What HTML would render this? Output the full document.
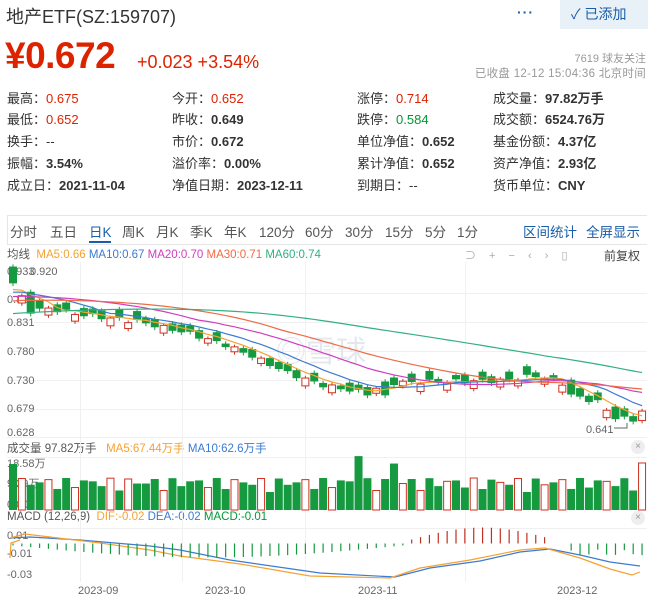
<!DOCTYPE html>
<html><head><meta charset="utf-8">
<style>
*{margin:0;padding:0;box-sizing:border-box}
body{width:648px;height:597px;background:#fff;font-family:"Liberation Sans","Noto Sans CJK SC",sans-serif;color:#333;position:relative;overflow:hidden}
.a{position:absolute;white-space:nowrap}
.r{color:#dd2200}.g{color:#093}
.st{font-size:13px}
.st b{font-weight:bold}
.tab{font-size:13.5px;color:#555}
</style></head><body>
<div class="a" style="left:6px;top:3px;font-size:18px;color:#333">地产ETF(SZ:159707)</div>
<div class="a" style="left:517px;top:4px;font-size:14px;color:#1a5ea8;font-weight:bold;letter-spacing:1px">···</div>
<div class="a" style="left:560px;top:0;width:88px;height:29px;background:#e8f0f8;color:#1a5ea8;font-size:14px;line-height:29px;padding-left:11px">✓ 已添加</div>
<div class="a r" style="left:5px;top:35px;font-size:37px;font-weight:bold;letter-spacing:-0.5px">¥0.672</div>
<div class="a r" style="left:137px;top:52px;font-size:18px">+0.023 +3.54%</div>
<div class="a" style="right:2px;top:50px;font-size:11px;color:#999;text-align:right">7619 球友关注</div>
<div class="a" style="right:2px;top:65px;font-size:11.5px;color:#999;text-align:right;letter-spacing:0.3px">已收盘 12-12 15:04:36 北京时间</div>

<div class="a st" style="left:7px;top:88px">最高：<span class="r">0.675</span></div>
<div class="a st" style="left:7px;top:109px">最低：<span class="r">0.652</span></div>
<div class="a st" style="left:7px;top:131px">换手：--</div>
<div class="a st" style="left:7px;top:153px">振幅：<b>3.54%</b></div>
<div class="a st" style="left:7px;top:175px">成立日：<b>2021-11-04</b></div>
<div class="a st" style="left:172px;top:88px">今开：<span class="r">0.652</span></div>
<div class="a st" style="left:172px;top:109px">昨收：<b>0.649</b></div>
<div class="a st" style="left:172px;top:131px">市价：<b>0.672</b></div>
<div class="a st" style="left:172px;top:153px">溢价率：<b>0.00%</b></div>
<div class="a st" style="left:172px;top:175px">净值日期：<b>2023-12-11</b></div>
<div class="a st" style="left:357px;top:88px">涨停：<span class="r">0.714</span></div>
<div class="a st" style="left:357px;top:109px">跌停：<span class="g">0.584</span></div>
<div class="a st" style="left:357px;top:131px">单位净值：<b>0.652</b></div>
<div class="a st" style="left:357px;top:153px">累计净值：<b>0.652</b></div>
<div class="a st" style="left:357px;top:175px">到期日：--</div>
<div class="a st" style="left:493px;top:88px">成交量：<b>97.82万手</b></div>
<div class="a st" style="left:493px;top:109px">成交额：<b>6524.76万</b></div>
<div class="a st" style="left:493px;top:131px">基金份额：<b>4.37亿</b></div>
<div class="a st" style="left:493px;top:153px">资产净值：<b>2.93亿</b></div>
<div class="a st" style="left:493px;top:175px">货币单位：<b>CNY</b></div>

<div class="a" style="left:7px;top:215px;width:640px;height:30px;border:1px solid #e6e6e6;border-right:none"></div>
<div class="a tab" style="left:10px;top:221px">分时</div>
<div class="a tab" style="left:50px;top:221px">五日</div>
<div class="a tab" style="left:89px;top:221px;color:#1a5ea8">日K</div>
<div class="a" style="left:89px;top:241px;width:22px;height:2px;background:#1a5ea8"></div>
<div class="a tab" style="left:122px;top:221px">周K</div>
<div class="a tab" style="left:156px;top:221px">月K</div>
<div class="a tab" style="left:190px;top:221px">季K</div>
<div class="a tab" style="left:224px;top:221px">年K</div>
<div class="a tab" style="left:259px;top:221px">120分</div>
<div class="a tab" style="left:305px;top:221px">60分</div>
<div class="a tab" style="left:345px;top:221px">30分</div>
<div class="a tab" style="left:385px;top:221px">15分</div>
<div class="a tab" style="left:425px;top:221px">5分</div>
<div class="a tab" style="left:457px;top:221px">1分</div>
<div class="a tab" style="left:523px;top:221px;color:#1a5ea8">区间统计</div>
<div class="a tab" style="left:586px;top:221px;color:#1a5ea8">全屏显示</div>

<div class="a" style="left:7px;top:246px;font-size:11.5px;color:#555">均线 &nbsp;<span style="color:#f5a133">MA5:0.66</span> <span style="color:#3b7bd0">MA10:0.67</span> <span style="color:#d03cc0">MA20:0.70</span> <span style="color:#f06a45">MA30:0.71</span> <span style="color:#30b080">MA60:0.74</span></div>
<div class="a" style="left:465px;top:247px;font-size:11px;color:#aaa;word-spacing:10px">⊃ + − ‹ › ▯</div>
<div class="a" style="left:604px;top:247px;font-size:12px;color:#444">前复权</div>

<div class="a" style="left:7px;top:440px;font-size:11.5px;color:#555">成交量 97.82万手 &nbsp; <span style="color:#f5a133">MA5:67.44万手</span> <span style="color:#3b7bd0">MA10:62.6万手</span></div>
<div class="a" style="left:7px;top:511px;font-size:11.5px;color:#555">MACD (12,26,9) &nbsp;<span style="color:#f5a133">DIF:-0.02</span> <span style="color:#3b7bd0">DEA:-0.02</span> <span style="color:#093">MACD:-0.01</span></div>
<div class="a" style="left:631px;top:440px;font-size:10px;color:#999;background:#eee;border-radius:7px;width:14px;height:14px;text-align:center;line-height:14px">×</div>
<div class="a" style="left:631px;top:511px;font-size:10px;color:#999;background:#eee;border-radius:7px;width:14px;height:14px;text-align:center;line-height:14px">×</div>

<svg id="c" class="a" style="left:0;top:0" width="648" height="597" xmlns="http://www.w3.org/2000/svg">
<g stroke="#f0f0f0" stroke-width="1">
<line x1="7" y1="293.5" x2="647" y2="293.5"/><line x1="7" y1="322.5" x2="647" y2="322.5"/><line x1="7" y1="351.5" x2="647" y2="351.5"/><line x1="7" y1="380.5" x2="647" y2="380.5"/><line x1="7" y1="409.5" x2="647" y2="409.5"/><line x1="7" y1="437.5" x2="647" y2="437.5"/>
<line x1="80.5" y1="262" x2="80.5" y2="582"/><line x1="182.5" y1="262" x2="182.5" y2="582"/><line x1="305.5" y1="262" x2="305.5" y2="582"/><line x1="465.5" y1="262" x2="465.5" y2="582"/>
<line x1="7" y1="457.5" x2="647" y2="457.5"/><line x1="7" y1="528.5" x2="647" y2="528.5"/>
</g>
<text x="276" y="362" font-size="30" fill="#e4e8ee" font-family="Liberation Sans,Noto Sans CJK SC,sans-serif">◎雪球</text>
<g font-size="11" fill="#666" font-family="Liberation Sans,sans-serif">
<text x="7" y="275">0.933</text><text x="30" y="275">0.920</text><text x="7" y="303">0.882</text><text x="7" y="326">0.831</text><text x="7" y="355">0.780</text><text x="7" y="384">0.730</text><text x="7" y="412">0.679</text><text x="7" y="436">0.628</text>
<text x="586" y="433">0.641</text>
<text x="7" y="467">18.58万</text><text x="7" y="487">9.29万</text><text x="7" y="508">0.00</text>
<text x="7" y="539">0.01</text><text x="7" y="557">-0.01</text><text x="7" y="578">-0.03</text>
<text x="78" y="594">2023-09</text><text x="205" y="594">2023-10</text><text x="358" y="594">2023-11</text><text x="557" y="594">2023-12</text>
</g>
<polyline points="614,428 627,428 627,423" fill="none" stroke="#666" stroke-width="1"/>
<g id="g"></g>
</svg>
<script>
var K=[[0,0.90],[2,0.85],[4,0.855],[8,0.843],[14,0.832],[20,0.81],[24,0.79],[27,0.77],[31,0.74],[35,0.718],[40,0.703],[42,0.722],[47,0.724],[55,0.726],[59,0.735],[62,0.722],[63,0.70],[66,0.688],[68,0.66],[70,0.656],[71,0.672]];
var N=72,c=[];
for(var i=0;i<N;i++){for(var k=0;k<K.length-1;k++){if(i>=K[k][0]&&i<=K[k+1][0]){var t=(i-K[k][0])/(K[k+1][0]-K[k][0]);c.push(K[k][1]+t*(K[k+1][1]-K[k][1])+(k<K.length-2?0.004*Math.sin(i*2.3):0));break;}}}
function Y(p){return 322+(0.831-p)*560;}
function X(i){return 9+i*8.86;}
var s='',up=[1,4,7,11,13,17,22,25,28,33,36,41,44,46,49,52,55,57,60,62,67,71];
for(i=0;i<N;i++){var cl=c[i],isU=up.indexOf(i)>=0,op=isU?cl-0.008-0.006*Math.abs(Math.sin(i)):cl+0.006+0.01*Math.abs(Math.sin(i*1.7));
if(i==0)op=0.93;if(i==2)op=0.885;if(i==42)op=0.70;if(i==71)op=0.655;if(i==68)op=0.68;if(i==63)op=0.728;
var hi=Math.max(op,cl)+0.004,lo=Math.min(op,cl)-0.005,x=X(i),col=isU?'#d03020':'#169a40';
s+='<line x1="'+(x+4)+'" x2="'+(x+4)+'" y1="'+Y(hi)+'" y2="'+Y(lo)+'" stroke="'+col+'"/>';
var t=Y(Math.max(op,cl)),h=Math.max(2,Math.abs(Y(op)-Y(cl)));
s+=isU?'<rect x="'+(x+0.5)+'" y="'+t+'" width="7" height="'+h+'" fill="#fff" stroke="'+col+'"/>':'<rect x="'+x+'" y="'+t+'" width="8" height="'+h+'" fill="'+col+'"/>';
var vh=18+14*Math.abs(Math.sin(i*1.3))+(i==0?28:0)+(i==39?30:0)+(i==43?20:0)+(i==71?16:0);
s+=isU?'<rect x="'+(x+0.5)+'" y="'+(510-vh)+'" width="7" height="'+vh+'" fill="#fff" stroke="'+col+'"/>':'<rect x="'+x+'" y="'+(510-vh)+'" width="8" height="'+vh+'" fill="'+col+'"/>';
}
var pre=[];for(i=0;i<60;i++)pre.push(0.80+i*0.0015);var all=pre.concat(c);
function ma(n,clr){var p='';for(var i=0;i<N;i++){var sm=0;for(var j=0;j<n;j++)sm+=all[60+i-j];p+=(X(i)+4)+','+Y(sm/n)+' ';}return '<polyline points="'+p+'" fill="none" stroke="'+clr+'" stroke-width="1.2"/>';}
s+=ma(5,'#f5a133')+ma(10,'#3b7bd0')+ma(20,'#d03cc0')+ma(30,'#f06a45')+ma(60,'#30b080');
function pl(pts,clr){var p='';for(var i=0;i<pts.length;i++)p+=pts[i][0]+','+pts[i][1]+' ';return '<polyline points="'+p+'" fill="none" stroke="'+clr+'" stroke-width="1.2"/>';}
s+=pl([[10,538],[30,537],[80,540],[150,546],[180,550],[230,560],[320,573],[395,577],[430,568],[480,561],[520,552],[550,549],[580,555],[610,562],[640,566]],'#3b7bd0');
s+=pl([[10,538],[25,534],[50,537],[100,543],[150,550],[180,556],[240,564],[310,576],[390,578],[420,568],[470,560],[520,550],[545,548],[580,558],[610,569],[632,575],[640,572]],'#f5a133');
s+=pl([[10,558],[11,543],[20,540]],'#f5a133');
var z=543.5;
for(i=0;i<N;i++){var x=X(i)+4,v;
if(i<45)v=-(2+12*Math.sin(Math.PI*i/44));else if(i<61)v=4+12*Math.sin(Math.PI*(i-45)/16);else if(i<63)v=0;else v=-6-6*Math.abs(Math.sin(i));
s+='<line x1="'+x+'" x2="'+x+'" y1="'+z+'" y2="'+(z-v)+'" stroke="'+(v>0?'#c03020':'#169a40')+'" stroke-width="1.2"/>';}
document.getElementById('g').innerHTML=s;
</script>
</body></html>
